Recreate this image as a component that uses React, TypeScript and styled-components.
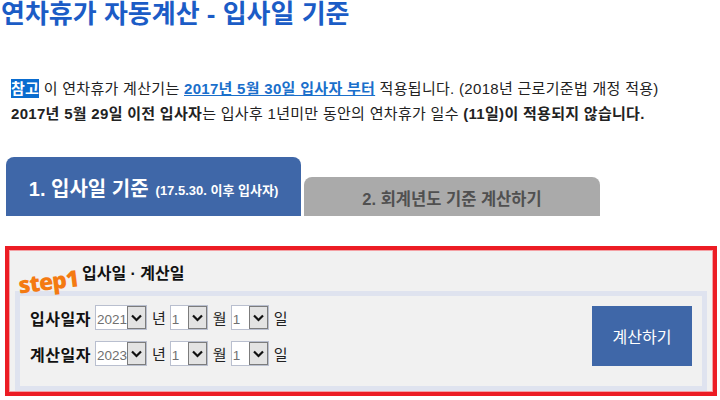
import styled, { createGlobalStyle } from "styled-components"

const FONT = `"Liberation Sans", "Noto Sans CJK KR", sans-serif`

const GlobalStyle = createGlobalStyle`
  html, body {
    margin: 0;
    padding: 0;
    background: #ffffff;
    font-family: ${FONT};
    color: #222222;
  }
`

const years = ["2019", "2020", "2021", "2022", "2023", "2024"]
const months = Array.from({ length: 12 }, (_, i) => String(i + 1))
const days = Array.from({ length: 31 }, (_, i) => String(i + 1))

type DateRowProps = {
  label: string
  year: string
}

const DateRow = ({ label, year }: DateRowProps) => (
  <Row>
    <RowLabel>{label}</RowLabel>
    <SelectBox $width={52}>
      <Select defaultValue={year}>
        {years.map((y) => (
          <option key={y}>{y}</option>
        ))}
      </Select>
      <Arrow>
        <Chevron />
      </Arrow>
    </SelectBox>
    <Unit>년</Unit>
    <SelectBox $width={38}>
      <Select defaultValue="1">
        {months.map((m) => (
          <option key={m}>{m}</option>
        ))}
      </Select>
      <Arrow>
        <Chevron />
      </Arrow>
    </SelectBox>
    <Unit>월</Unit>
    <SelectBox $width={38}>
      <Select defaultValue="1">
        {days.map((d) => (
          <option key={d}>{d}</option>
        ))}
      </Select>
      <Arrow>
        <Chevron />
      </Arrow>
    </SelectBox>
    <Unit>일</Unit>
  </Row>
)

const Chevron = () => (
  <svg width="11" height="8" viewBox="0 0 11 8">
    <path d="M1 1.5 L5.5 6 L10 1.5" fill="none" stroke="#111" strokeWidth="2.2" />
  </svg>
)

export default function App() {
  return (
    <Page>
      <GlobalStyle />
      <Title>연차휴가 자동계산 - 입사일 기준</Title>
      <Notes>
        <NoteLine>
          <Badge>참고</Badge> 이 연차휴가 계산기는{" "}
          <NoteLink href="#">2017년 5월 30일 입사자 부터</NoteLink> 적용됩니다.
          (2018년 근로기준법 개정 적용)
        </NoteLine>
        <NoteLine>
          <b>2017년 5월 29일 이전 입사자</b>는 입사후 1년미만 동안의 연차휴가
          일수 <b>(11일)이 적용되지 않습니다.</b>
        </NoteLine>
      </Notes>
      <Tabs>
        <Tab $active>
          1. 입사일 기준 <TabSub>(17.5.30. 이후 입사자)</TabSub>
        </Tab>
        <Tab>2. 회계년도 기준 계산하기</Tab>
      </Tabs>
      <Panel>
        <StepHeader>
          <StepMark>step1</StepMark>
          <StepTitle>입사일 · 계산일</StepTitle>
        </StepHeader>
        <FormBox>
          <Rows>
            <DateRow label="입사일자" year="2021" />
            <DateRow label="계산일자" year="2023" />
          </Rows>
          <CalcButton>계산하기</CalcButton>
        </FormBox>
      </Panel>
    </Page>
  )
}

const Page = styled.div`
  width: 720px;
  height: 400px;
  overflow: hidden;
`

const Title = styled.h1`
  margin: 0;
  padding: 0 0 0 1px;
  font-size: 26px;
  line-height: 28px;
  font-weight: bold;
  color: #1b5cc6;
`

const Notes = styled.div`
  margin-top: 48px;
  padding-left: 11px;
  font-size: 15px;
`

const NoteLine = styled.div`
  line-height: 25px;
  white-space: nowrap;
  letter-spacing: 0.3px;
`

const Badge = styled.span`
  background: #0a6ccf;
  color: #ffffff;
  font-weight: bold;
  padding: 1px 0;
`

const NoteLink = styled.a`
  color: #1a6fcb;
  font-weight: bold;
  text-decoration: underline;
`

const Tabs = styled.div`
  display: flex;
  align-items: flex-end;
  gap: 3px;
  margin-top: 31px;
  padding-left: 6px;
`

const Tab = styled.div<{ $active?: boolean }>`
  box-sizing: border-box;
  width: ${({ $active }) => ($active ? "295px" : "296px")};
  height: ${({ $active }) => ($active ? "59px" : "39px")};
  border-radius: 8px 8px 0 0;
  background: ${({ $active }) => ($active ? "#3f67a8" : "#aaaaaa")};
  color: ${({ $active }) => ($active ? "#ffffff" : "#505050")};
  font-weight: bold;
  font-size: ${({ $active }) => ($active ? "20px" : "16.5px")};
  display: flex;
  align-items: center;
  justify-content: center;
  gap: 7px;
  white-space: nowrap;
  padding-top: 2px;
`

const TabSub = styled.span`
  font-size: 13px;
  padding-top: 4px;
`

const Panel = styled.div`
  box-sizing: border-box;
  width: 712px;
  height: 150px;
  margin: 30px 0 0 5px;
  border: 4px solid #ec1c24;
  box-shadow: inset 0 0 0 1px #f4a0a4;
  background: #f1f1f1;
  padding: 0 6px;
`

const StepHeader = styled.div`
  height: 41px;
  display: flex;
  align-items: flex-end;
  gap: 4px;
  padding-left: 3px;
`

const StepMark = styled.span`
  color: #f47a12;
  font-family: "Open Sans", "Liberation Sans", sans-serif;
  font-weight: 800;
  font-size: 23px;
  line-height: 28px;
  letter-spacing: -1px;
  display: inline-block;
  transform: rotate(-7deg) translateY(2px);
  margin-bottom: -2px;
`

const StepTitle = styled.span`
  font-size: 16px;
  font-weight: bold;
  color: #111111;
  line-height: 20px;
  margin-bottom: 7px;
`

const FormBox = styled.div`
  box-sizing: border-box;
  height: 100px;
  border: 5px solid #dfe3ef;
  background: #f1f1f1;
  display: flex;
  align-items: flex-start;
  justify-content: space-between;
  padding: 9px 10px 0 10px;
`

const Rows = styled.div`
  display: flex;
  flex-direction: column;
  gap: 11px;
`

const Row = styled.div`
  display: flex;
  align-items: center;
  height: 25px;
`

const RowLabel = styled.span`
  font-size: 16px;
  font-weight: bold;
  color: #111111;
  width: 65px;
  letter-spacing: 0.5px;
  white-space: nowrap;
`

const SelectBox = styled.div<{ $width: number }>`
  box-sizing: border-box;
  width: ${({ $width }) => $width}px;
  height: 25px;
  display: flex;
  border: 1px solid #b9bfcf;
  background: #ffffff;
`

const Select = styled.select`
  appearance: none;
  border: none;
  outline: none;
  background: transparent;
  font-family: ${FONT};
  font-size: 13.5px;
  color: #707070;
  padding: 3px 0 0 1px;
  margin: 0;
  flex: 1;
  min-width: 0;
`

const Arrow = styled.span`
  box-sizing: border-box;
  width: 19px;
  height: 100%;
  display: flex;
  align-items: center;
  justify-content: center;
  background: #e3e3e3;
  border: 1px solid #7c7c7c;
  flex-shrink: 0;
`

const Unit = styled.span`
  font-size: 15px;
  color: #222222;
  padding: 0 4px 0 5px;
`

const CalcButton = styled.button`
  width: 100px;
  height: 60px;
  margin-top: 1px;
  border: none;
  background: #3f67a8;
  color: #ffffff;
  font-family: ${FONT};
  font-size: 16px;
  cursor: pointer;
`
